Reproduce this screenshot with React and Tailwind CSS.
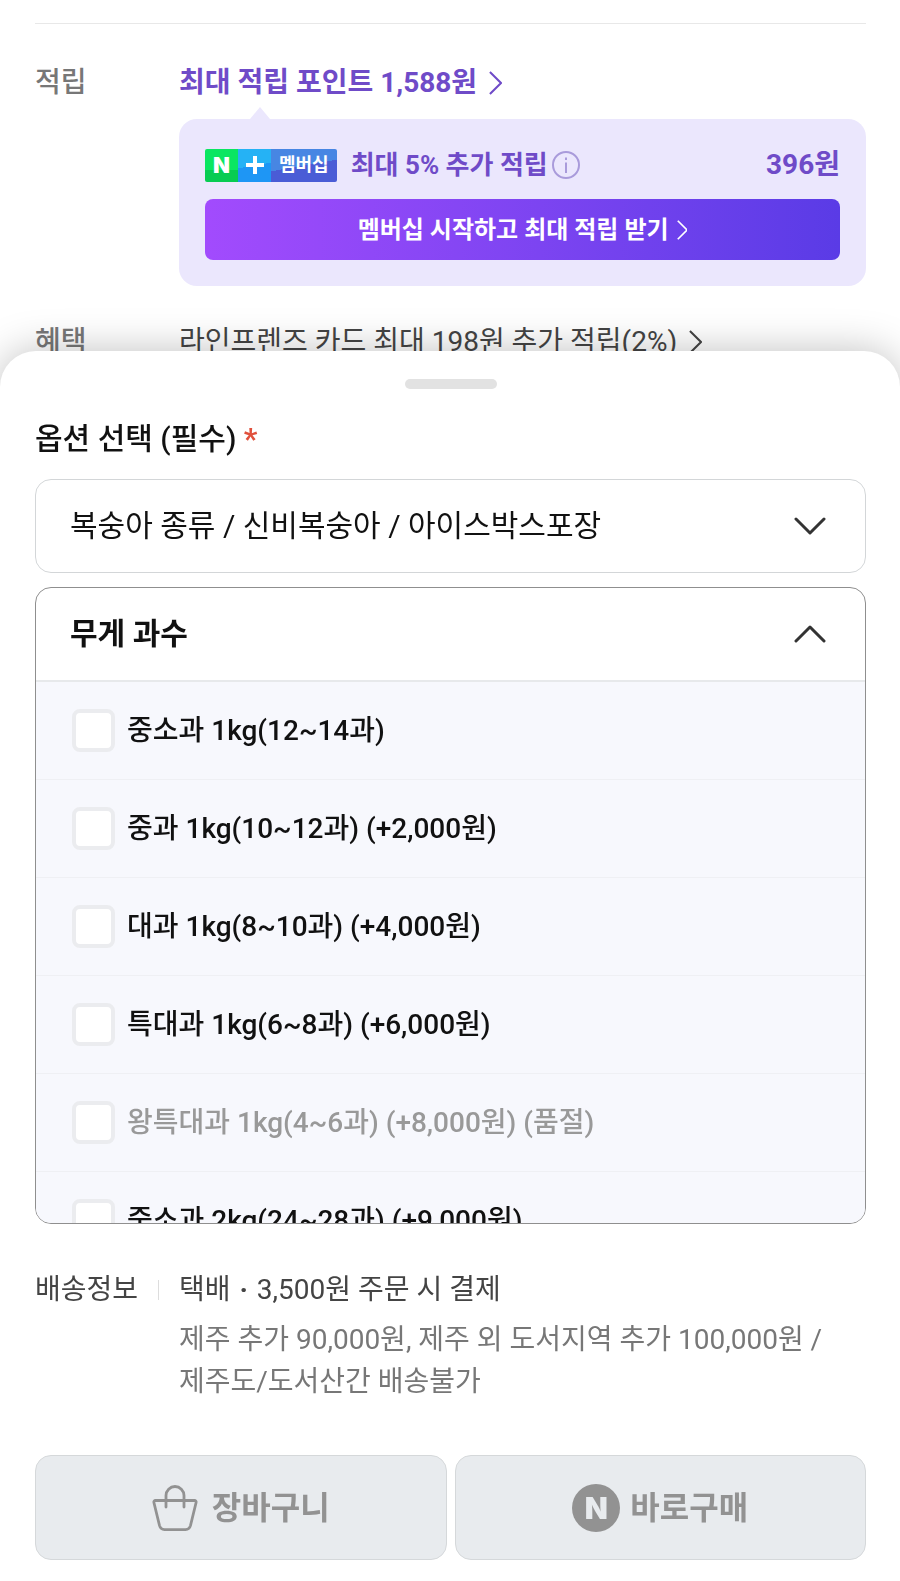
import { useState } from "react";

const OPTIONS = [
  { id: "w1", label: "중소과 1kg(12~14과)" },
  { id: "w2", label: "중과 1kg(10~12과) (+2,000원)" },
  { id: "w3", label: "대과 1kg(8~10과) (+4,000원)" },
  { id: "w4", label: "특대과 1kg(6~8과) (+6,000원)" },
  { id: "w5", label: "왕특대과 1kg(4~6과) (+8,000원) (품절)", soldOut: true },
  { id: "w6", label: "중소과 2kg(24~28과) (+9,000원)" },
];

function ArrowRight({ className }) {
  return (
    <svg className={className} viewBox="0 0 14 26" fill="none" stroke="currentColor" strokeWidth="2.2" aria-hidden="true">
      <path d="M1 1l12 12L1 25" />
    </svg>
  );
}

function Chevron({ className }) {
  return (
    <svg className={className} viewBox="0 0 32 18" fill="none" stroke="currentColor" strokeWidth="3" strokeLinecap="round" strokeLinejoin="round" aria-hidden="true">
      <path d="M2 2l14 14L30 2" />
    </svg>
  );
}

function MembershipBadge() {
  return (
    <span className="flex h-[33px] overflow-hidden rounded-xs text-white">
      <span className="flex w-[33px] items-center justify-center bg-linear-to-b from-[#0ae661] from-65% to-[#08cc52] to-65% font-['Inter',sans-serif] text-[22px] font-black">N</span>
      <span className="flex w-[33px] items-center justify-center bg-linear-170 from-[#25b2f5] from-50% to-[#1e96f5] to-50%">
        <svg className="size-[18px]" viewBox="0 0 18 18" fill="none" stroke="currentColor" strokeWidth="4" aria-hidden="true">
          <path d="M9 0v18M0 9h18" />
        </svg>
      </span>
      <span className="flex items-center bg-linear-170 from-[#4786e3] from-50% to-[#4a5cd6] to-50% px-2 text-lg font-bold">멤버십</span>
    </span>
  );
}

export default function App() {
  const [open, setOpen] = useState(true);
  const [picked, setPicked] = useState([]);

  const toggle = (id) => {
    setPicked((prev) => (prev.includes(id) ? prev.filter((p) => p !== id) : [...prev, id]));
  };

  return (
    <div className="min-h-screen overflow-hidden break-keep bg-white font-['Roboto','Noto_Sans_CJK_KR',sans-serif] text-[28px] leading-10 text-[#111]">
      {/* Product info behind the sheet */}
      <div className="pl-[35px] pr-[34px] pt-[23px]">
        <div className="flex border-t border-[#e8e8e8] pt-[39px]">
          <div className="w-36 shrink-0 font-medium text-[#777]">적립</div>
          <div className="min-w-0 flex-1">
            <a href="#points" className="flex items-center gap-3 font-bold text-[#6f4bc8]">
              최대 적립 포인트 1,588원
              <ArrowRight className="h-6" />
            </a>
            <svg className="ml-[71px] mt-1 h-3 w-5" viewBox="0 0 20 12" aria-hidden="true">
              <path d="M10 0l10 12H0z" fill="#ebe7fd" />
            </svg>
            <div className="rounded-[18px] bg-[#ebe7fd] p-[26px]">
              <div className="flex items-center text-[26px] font-bold text-[#6f4bc8]">
                <MembershipBadge />
                <span className="ml-3.5 mr-1">최대 5% 추가 적립</span>
                <svg className="size-7 text-[#a99bdb]" viewBox="0 0 28 28" fill="none" stroke="currentColor" strokeWidth="2" aria-hidden="true">
                  <circle cx="14" cy="14" r="13" />
                  <path d="M14 11.5v10.5M14 6.5v2.5" />
                </svg>
                <span className="ml-auto text-[28px]">396원</span>
              </div>
              <button type="button" className="mt-3.5 flex h-[61px] w-full items-center justify-center gap-2 rounded-lg bg-linear-to-r from-[#a24bfd] to-[#5a3be6] text-2xl font-bold text-white">
                멤버십 시작하고 최대 적립 받기
                <ArrowRight className="h-5" />
              </button>
            </div>
          </div>
        </div>
        <div className="flex pt-9">
          <div className="w-36 shrink-0 font-medium text-[#777]">혜택</div>
          <a href="#benefit" className="flex items-center gap-3 text-[#444]">
            라인프렌즈 카드 최대 198원 추가 적립(2%)
            <ArrowRight className="h-6" />
          </a>
        </div>
      </div>

      {/* Option sheet */}
      <div className="relative -mt-[11px] rounded-t-[36px] bg-white pb-[22px] pl-[35px] pr-[34px] pt-7 shadow-[0_0_40px_rgba(0,0,0,0.25)]">
        <div className="mx-auto h-2.5 w-[92px] rounded-full bg-[#e2e2e2]"></div>

        <label htmlFor="kind" className="mt-[30px] block text-3xl leading-10 font-medium">
          옵션 선택 (필수) <span className="font-bold text-[#e0503c]">*</span>
        </label>

        <div className="relative mt-5">
          <select id="kind" className="h-[94px] w-full appearance-none rounded-2xl border border-[#d3d6d8] bg-white px-[34px] text-3xl">
            <option>복숭아 종류 / 신비복숭아 / 아이스박스포장</option>
          </select>
          <Chevron className="pointer-events-none absolute right-10 top-[38px] w-8 text-[#333]" />
        </div>

        <div className="mt-3.5 overflow-hidden rounded-2xl border border-[#8f8f8f]">
          <button type="button" aria-expanded={open} onClick={() => setOpen(!open)} className="flex h-[92px] w-full items-center justify-between px-[39px] pl-[34px] text-3xl font-bold">
            무게 과수
            <Chevron className={open ? "w-8 rotate-180 text-[#333]" : "w-8 text-[#333]"} />
          </button>
          {open && (
            <ul className="max-h-[543px] overflow-y-auto border-t-2 border-[#e7e9eb] bg-[#f7f8fd] [scrollbar-width:none]">
              {OPTIONS.map((o) => (
                <li key={o.id} className="border-b border-[#eff0f4]">
                  <label className={`flex h-[97px] items-center gap-3 pl-9 font-medium ${o.soldOut ? "text-[#999]" : "text-[#111]"}`}>
                    <input
                      type="checkbox"
                      disabled={o.soldOut}
                      checked={picked.includes(o.id)}
                      onChange={() => toggle(o.id)}
                      className="size-[43px] appearance-none rounded-lg border-4 border-[#ebecef] bg-white checked:bg-[#6f4bc8]"
                    />
                    {o.label}
                  </label>
                </li>
              ))}
            </ul>
          )}
        </div>

        <div className="mt-[46px] flex text-[#444]">
          <div className="flex w-36 shrink-0 items-center justify-between self-start pr-5">
            배송정보
            <span className="h-5 w-px bg-[#ddd]"></span>
          </div>
          <div>
            <p>택배 <span className="px-0.5 font-bold">·</span> 3,500원 주문 시 결제</p>
            <p className="mt-[9px] leading-[42px] text-[#777]">제주 추가 90,000원, 제주 외 도서지역 추가 100,000원 / 제주도/도서산간 배송불가</p>
          </div>
        </div>

        <div className="mt-[52px] grid grid-cols-2 gap-2 text-[32px] font-bold text-[#929292]">
          <button type="button" className="flex h-[105px] items-center justify-center gap-3.5 rounded-2xl border border-[#d5d8da] bg-[#e8ebee]">
            <svg className="size-[46px]" viewBox="0 0 46 46" fill="none" stroke="currentColor" strokeWidth="2.8" strokeLinecap="round" strokeLinejoin="round" aria-hidden="true">
              <path d="M3.5 15.5h39c1.2 0 1.9.9 1.6 2l-5.6 23c-.7 2.6-2.4 4.1-5 4.1h-21c-2.6 0-4.3-1.5-5-4.1l-5.6-23c-.3-1.1.4-2 1.6-2z" />
              <path d="M14 22V10.5a9 9 0 0 1 18 0V22" />
            </svg>
            장바구니
          </button>
          <button type="button" className="flex h-[105px] items-center justify-center gap-2.5 rounded-2xl border border-[#d5d8da] bg-[#e8ebee]">
            <span className="flex size-12 items-center justify-center rounded-full bg-[#929292] font-['Inter',sans-serif] text-3xl font-black text-[#e8ebee]">N</span>
            바로구매
          </button>
        </div>
      </div>
    </div>
  );
}
